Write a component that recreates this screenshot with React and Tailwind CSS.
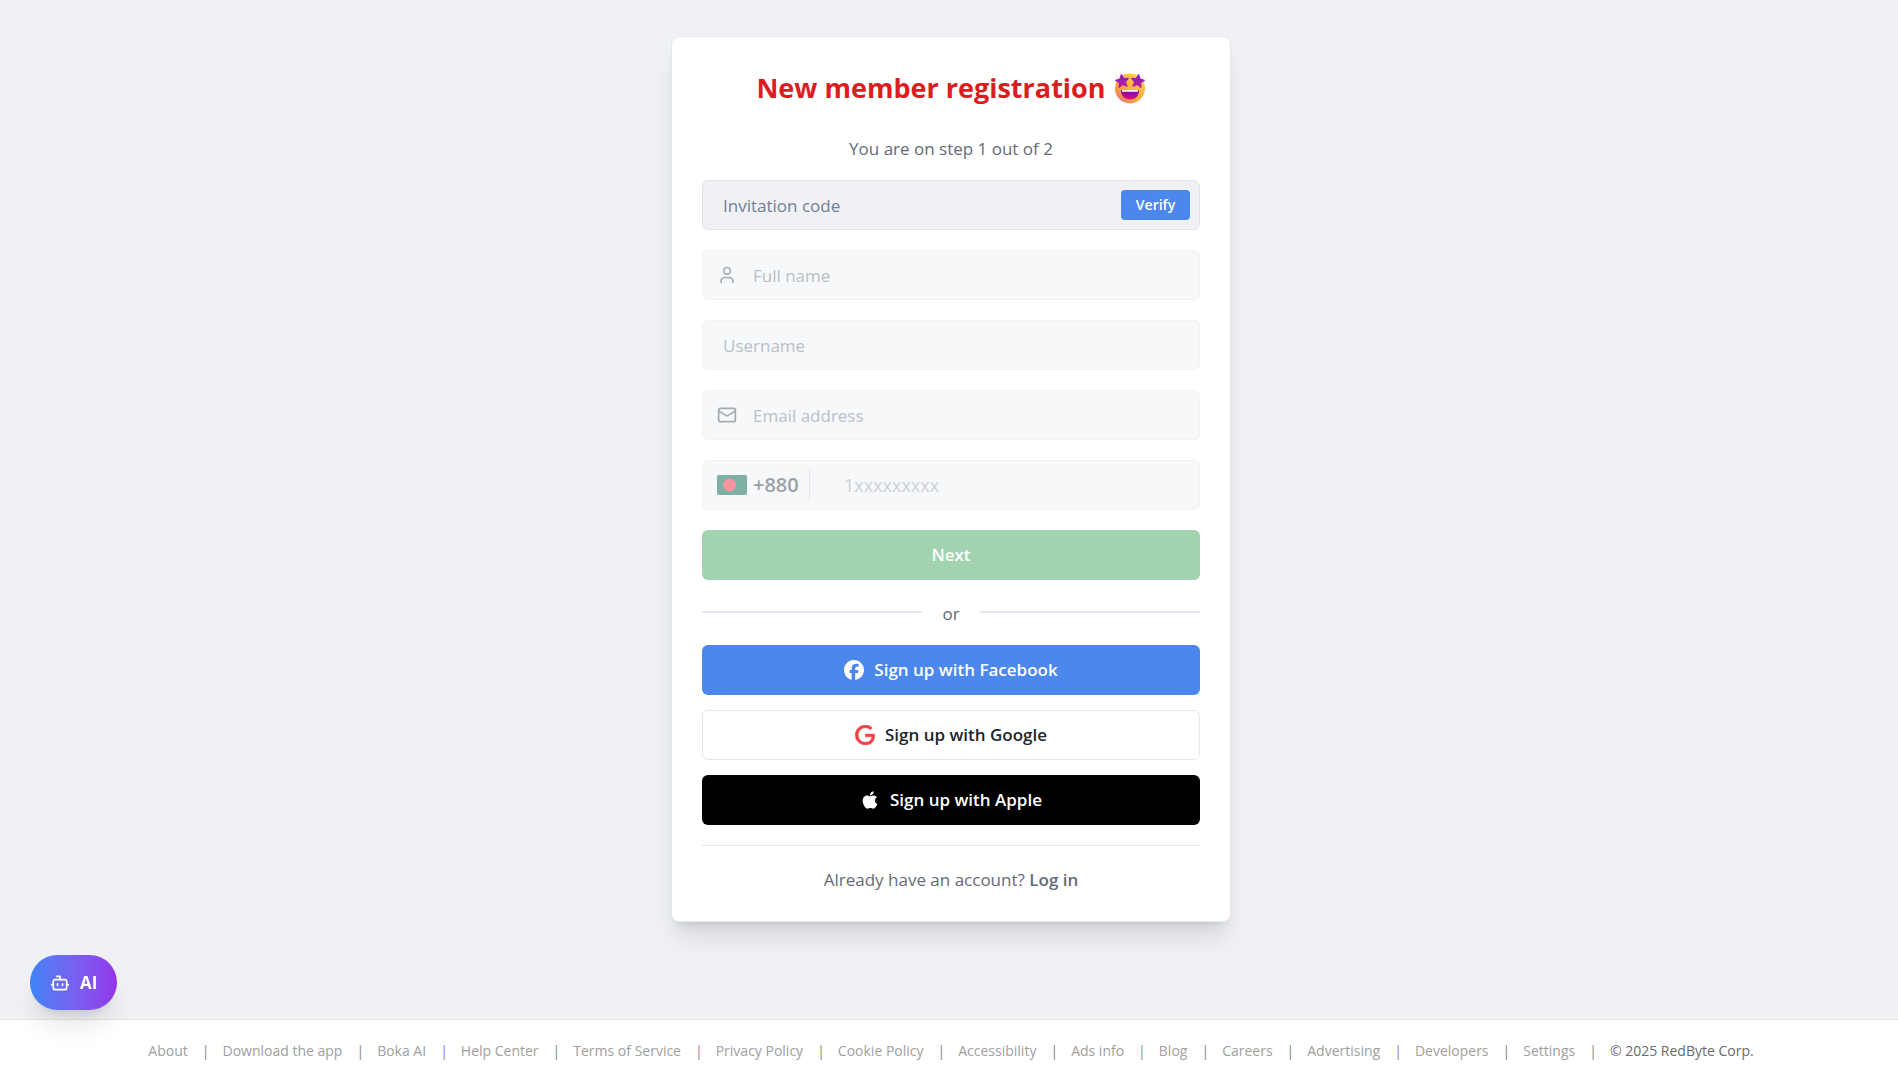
import React from 'react';
import { User, Mail, Bot } from 'lucide-react';
import { FaFacebook, FaApple } from 'react-icons/fa6';

const FOOTER_LINKS = [
  'About',
  'Download the app',
  'Boka AI',
  'Help Center',
  'Terms of Service',
  'Privacy Policy',
  'Cookie Policy',
  'Accessibility',
  'Ads info',
  'Blog',
  'Careers',
  'Advertising',
  'Developers',
  'Settings',
];

function StarStruck() {
  const star = 'M0 -6.4 L1.9 -2.2 L6.4 -1.7 L3 1.3 L4 5.8 L0 3.5 L-4 5.8 L-3 1.3 L-6.4 -1.7 L-1.9 -2.2 Z';
  return (
    <svg viewBox="0 0 32 32" className="size-8" role="img" aria-label="Star-struck face">
      <defs>
        <linearGradient id="face" x1="0.85" y1="0.1" x2="0.15" y2="0.95">
          <stop offset="0" stopColor="#ffce45" />
          <stop offset="0.6" stopColor="#fcab40" />
          <stop offset="0.85" stopColor="#f08a55" />
          <stop offset="1" stopColor="#dc6a94" />
        </linearGradient>
        <linearGradient id="star" x1="0" y1="0" x2="0" y2="1">
          <stop offset="0" stopColor="#8322b4" />
          <stop offset="1" stopColor="#bb1aa6" />
        </linearGradient>
        <linearGradient id="mouth" x1="0" y1="0" x2="0" y2="1">
          <stop offset="0" stopColor="#7a0a96" />
          <stop offset="1" stopColor="#e0087f" />
        </linearGradient>
      </defs>
      <circle cx="16" cy="16.5" r="15" fill="url(#face)" />
      <path d={star} transform="translate(8.2 9) rotate(-8)" fill="url(#star)" stroke="url(#star)" strokeWidth="1.2" strokeLinejoin="round" />
      <path d={star} transform="translate(23.8 9) rotate(8)" fill="url(#star)" stroke="url(#star)" strokeWidth="1.2" strokeLinejoin="round" />
      <path d="M7 18 H25 C25 24 21.5 27.5 16 27.5 S7 24 7 18 Z" fill="url(#mouth)" />
      <path d="M8 18 H24 V18.9 Q24 19.7 23.2 19.7 H8.8 Q8 19.7 8 18.9 Z" fill="#ffffff" />
    </svg>
  );
}

function GoogleMark() {
  return (
    <svg viewBox="0 0 24 24" className="size-5 text-[#ef4444]" fill="currentColor" aria-hidden="true">
      <path d="M12.48 10.92v3.28h7.84c-.24 1.84-.853 3.187-1.787 4.133-1.147 1.147-2.933 2.4-6.053 2.4-4.827 0-8.6-3.893-8.6-8.72s3.773-8.72 8.6-8.72c2.6 0 4.507 1.027 5.907 2.347l2.307-2.307C18.747 1.44 16.133 0 12.48 0 5.867 0 .307 5.387.307 12s5.56 12 12.173 12c3.573 0 6.267-1.173 8.373-3.36 2.16-2.16 2.84-5.213 2.84-7.667 0-.76-.053-1.467-.173-2.053H12.48z" stroke="currentColor" strokeWidth="0.6" />
    </svg>
  );
}

function Field({ id, label, icon, type = 'text' }) {
  return (
    <div className="flex h-[50px] items-center rounded-md border border-[#e4e6eb] bg-[#eff2f5] opacity-50">
      {icon && (
        <label htmlFor={id} className="pl-[14px] text-[#4b5563]">
          {icon}
        </label>
      )}
      <input
        id={id}
        type={type}
        disabled
        aria-label={label}
        placeholder={label}
        className={
          (icon ? 'pl-4' : 'pl-5') +
          ' h-full min-w-0 flex-1 bg-transparent pr-4 text-[17px] placeholder:text-[#718096] focus:outline-none'
        }
      />
    </div>
  );
}

const social = 'flex h-[50px] w-full items-center justify-center gap-[10px] rounded-md text-[17px] font-semibold';

export default function App() {
  return (
    <div className="flex min-h-screen flex-col bg-[#f0f1f5] font-['Open_Sans','Noto_Sans',sans-serif] text-[17px] leading-7 text-[#646b7a]">
      <main className="flex flex-1 justify-center pt-9 pb-8 pl-1">
        <section className="h-fit w-full max-w-[560px] rounded-lg border border-[#e2e8f0] bg-white px-[30px] pt-[30px] pb-[27px] shadow-xl">
          <h1 className="flex items-center justify-center gap-2 text-[27px] leading-[42px] font-bold text-[#dc1c20]">
            New member registration <StarStruck />
          </h1>
          <p className="mt-[26px] text-center">You are on step 1 out of 2</p>

          <form className="mt-[17px] flex flex-col gap-5" onSubmit={(e) => e.preventDefault()}>
            <div className="flex h-[50px] items-center rounded-md border border-[#e2e4e9] bg-[#f0f1f5] pr-[9px]">
              <input
                id="invite"
                type="text"
                aria-label="Invitation code"
                placeholder="Invitation code"
                className="h-full min-w-0 flex-1 bg-transparent pl-5 text-[17px] placeholder:text-[#718096] focus:outline-none"
              />
              <button type="button" className="h-[30px] w-[69px] rounded bg-[#4b87ec] text-sm font-semibold text-white">
                Verify
              </button>
            </div>
            <Field id="name" label="Full name" icon={<User size={20} strokeWidth={2} />} />
            <Field id="username" label="Username" />
            <Field id="email" type="email" label="Email address" icon={<Mail size={20} strokeWidth={2} />} />
            <div className="flex h-[50px] items-center rounded-md border border-[#e4e6eb] bg-[#eff2f5] pl-[14px] opacity-50">
              <svg viewBox="0 0 30 20" className="h-5 w-[30px]" role="img" aria-label="Bangladesh">
                <rect width="30" height="20" rx="2" fill="#00644a" />
                <circle cx="12.5" cy="10" r="6.5" fill="#f42a41" />
              </svg>
              <label htmlFor="phone" className="flex h-[30px] w-[63px] items-center border-r border-[#c9ccd3] pl-1.5 text-xl font-semibold text-[#374151]">
                +880
              </label>
              <input
                id="phone"
                type="tel"
                disabled
                placeholder="1xxxxxxxxx"
                className="h-full min-w-0 flex-1 bg-transparent pr-4 pl-[34px] text-lg placeholder:text-[#9ca3af] focus:outline-none"
              />
            </div>
            <button type="submit" disabled className="h-[50px] w-full rounded-md bg-[#a1d4ae] font-semibold text-white">
              Next
            </button>
          </form>

          <div className="mt-5 flex h-6 items-center gap-5">
            <span className="h-0.5 flex-1 bg-[#e2e8f0]" />
            <span className="pt-1 leading-6">or</span>
            <span className="h-0.5 flex-1 bg-[#e2e8f0]" />
          </div>

          <div className="mt-[21px] flex flex-col gap-[15px]">
            <button type="button" className={social + ' bg-[#4b87ec] text-white'}>
              <FaFacebook className="size-5" />
              Sign up with Facebook
            </button>
            <button type="button" className={social + ' border border-gray-200 bg-white text-[#212529]'}>
              <GoogleMark />
              Sign up with Google
            </button>
            <button type="button" className={social + ' bg-black text-white'}>
              <FaApple className="size-5" />
              Sign up with Apple
            </button>
          </div>

          <p className="mt-5 border-t border-gray-200 pt-5 text-center">
            Already have an account? <a href="#login" className="font-semibold">Log in</a>
          </p>
        </section>
      </main>

      <footer className="border-t border-gray-200 bg-white pt-[21px] pb-[17px] pl-1">
        <ul className="flex flex-wrap items-center justify-center text-sm leading-5 text-[#a0a0a0]">
          {FOOTER_LINKS.map((name) => (
            <li key={name} className="flex">
              <a href="#footer">{name}</a>
              <span className="pr-[13px] pl-[14px] text-[#8a8a8a]">|</span>
            </li>
          ))}
          <li className="text-[#6b6b6b]">© 2025 RedByte Corp.</li>
        </ul>
      </footer>

      <button
        type="button"
        className="fixed bottom-[68px] left-[30px] flex h-[55px] items-center gap-[10px] rounded-full bg-linear-to-r from-[#3b82f6] to-[#9333ea] px-5 text-[17px] font-bold text-white shadow-xl"
      >
        <Bot size={20} strokeWidth={2} />
        AI
      </button>
    </div>
  );
}
